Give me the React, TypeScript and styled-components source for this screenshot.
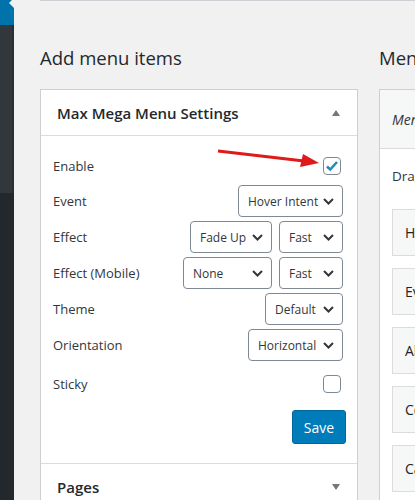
import React from 'react';
import styled, { createGlobalStyle } from 'styled-components';

const GlobalStyle = createGlobalStyle`
  html, body {
    margin: 0;
    padding: 0;
    background: #f1f1f1;
  }
  body {
    font-family: "Open Sans", "Noto Sans", Arial, sans-serif;
    color: #23282d;
    -webkit-font-smoothing: antialiased;
  }
`;

const Page = styled.div`
  display: flex;
  width: 415px;
  height: 500px;
  overflow: hidden;
  background: #f1f1f1;
`;

const Sidebar = styled.div`
  width: 14px;
  flex-shrink: 0;
  display: flex;
  flex-direction: column;
  background: #23282d;
`;

const SideCurrent = styled.div`
  position: relative;
  height: 25px;
  background: #0073aa;

  &::after {
    content: '';
    position: absolute;
    right: 0;
    top: -2px;
    border-right: 5px solid #f1f1f1;
    border-top: 5px solid transparent;
    border-bottom: 5px solid transparent;
  }
`;

const SideSub = styled.div`
  height: 168px;
  background: #32373c;
  border-right: 2px solid #2a2f33;
`;

const Main = styled.div`
  flex: 1;
  min-width: 0;
  padding-left: 26px;
  display: flex;
  flex-direction: column;
`;

const TopBox = styled.div`
  height: 4px;
  background: #fff;
  border: 1px solid #ccd0d4;
  border-top: none;
  margin-right: -20px;
`;

const Columns = styled.div`
  display: flex;
  gap: 21px;
`;

const Column = styled.div<{ $width?: number }>`
  width: ${({ $width }) => ($width ? `${$width}px` : 'auto')};
  flex-shrink: 0;
  display: flex;
  flex-direction: column;
`;

const Heading = styled.h2`
  margin: 0;
  padding-top: 44px;
  height: 44px;
  font-size: 18.5px;
  font-weight: 400;
  color: #23282d;
  white-space: nowrap;
`;

const Panel = styled.div`
  background: #fff;
  border: 1px solid #ccd0d4;
  border-bottom: none;
  height: 420px;
`;

const PanelHeader = styled.div`
  height: 45px;
  display: flex;
  align-items: center;
  justify-content: space-between;
  padding: 0 17px 0 16px;
  border-bottom: 1px solid #dcdcde;
`;

const PanelTitle = styled.h3`
  margin: 0;
  font-size: 15px;
  font-weight: 600;
  color: #23282d;
  white-space: nowrap;
`;

const Caret = styled.span<{ $down?: boolean }>`
  width: 0;
  height: 0;
  border-left: 4px solid transparent;
  border-right: 4px solid transparent;
  ${({ $down }) =>
    $down ? 'border-top: 6px solid #72777c;' : 'border-bottom: 6px solid #72777c;'}
`;

const PanelBody = styled.div`
  position: relative;
  padding: 12px 14px 19px 12px;
  display: flex;
  flex-direction: column;
  border-bottom: 1px solid #dcdcde;
`;

const Row = styled.div<{ $height?: number }>`
  height: ${({ $height }) => $height ?? 36}px;
  display: flex;
  align-items: center;
  justify-content: space-between;
`;

const Label = styled.span`
  font-size: 13px;
  color: #32373c;
`;

const Controls = styled.div`
  display: flex;
  gap: 7px;
`;

const Select = styled.div<{ $width: number }>`
  box-sizing: border-box;
  width: ${({ $width }) => $width}px;
  height: 32px;
  border: 1px solid #7e8993;
  border-radius: 4px;
  display: flex;
  align-items: center;
  justify-content: space-between;
  padding: 0 8px 0 9px;
  font-size: 12px;
  color: #32373c;
  background: #fff;
  white-space: nowrap;
`;

const Checkbox = styled.span`
  box-sizing: border-box;
  width: 18px;
  height: 18px;
  margin-right: 2px;
  border: 1px solid #7e8993;
  border-radius: 4px;
  display: flex;
  align-items: center;
  justify-content: center;
  background: #fff;
`;

const ButtonRow = styled.div`
  display: flex;
  justify-content: flex-end;
  margin-top: 5px;
  margin-right: -3px;
`;

const SaveButton = styled.button`
  width: 54px;
  height: 34px;
  border: 1px solid #006799;
  border-radius: 3px;
  background: #007cba;
  color: #fff;
  font-family: inherit;
  font-size: 14px;
  padding: 0;
`;

const SectionHeader = styled.div`
  height: 46px;
  display: flex;
  align-items: center;
  justify-content: space-between;
  padding: 0 17px 0 16px;
`;

const Arrow = styled.svg`
  position: absolute;
  left: 177px;
  top: 12px;
  overflow: visible;
`;

const RightPanel = styled.div`
  background: #fff;
  border: 1px solid #ccd0d4;
  border-right: none;
  width: 60px;
  height: 420px;
  overflow: hidden;
`;

const RightHeader = styled.div`
  height: 58px;
  display: flex;
  align-items: center;
  padding-left: 12px;
  background: #f6f7f7;
  border-bottom: 1px solid #dcdcde;
  font-size: 14px;
  font-style: italic;
  color: #32373c;
  white-space: nowrap;
`;

const RightBody = styled.div`
  padding: 18px 0 0 12px;
  display: flex;
  flex-direction: column;
  gap: 12px;
`;

const Hint = styled.div`
  font-size: 13.5px;
  color: #32373c;
  white-space: nowrap;
  margin-bottom: 12px;
`;

const MenuItem = styled.div`
  box-sizing: border-box;
  height: 47px;
  width: 240px;
  display: flex;
  align-items: center;
  padding-left: 12px;
  background: #f6f7f7;
  border: 1px solid #dcdcde;
  font-size: 14px;
  color: #1d2327;
  white-space: nowrap;
`;

const Chevron = () => (
  <svg width="11" height="7" viewBox="0 0 11 7">
    <path d="M1 1l4.5 4.5L10 1" fill="none" stroke="#32373c" strokeWidth="2" />
  </svg>
);

const Check = () => (
  <svg width="14" height="12" viewBox="0 0 14 12">
    <path d="M2 6.5l3.2 3L12 2" fill="none" stroke="#1e8cbe" strokeWidth="2.6" />
  </svg>
);

const Dropdown = ({ value, width }: { value: string; width: number }) => (
  <Select $width={width}>
    <span>{value}</span>
    <Chevron />
  </Select>
);

const menuItems = ['Home', 'Events', 'About', 'Contact', 'Careers'];

export default function App() {
  return (
    <>
      <GlobalStyle />
      <Page>
        <Sidebar>
          <SideCurrent />
          <SideSub />
        </Sidebar>
        <Main>
          <TopBox />
          <Columns>
            <Column $width={318}>
              <Heading>Add menu items</Heading>
              <Panel>
                <PanelHeader>
                  <PanelTitle>Max Mega Menu Settings</PanelTitle>
                  <Caret />
                </PanelHeader>
                <PanelBody>
                  <Arrow width="104" height="20" viewBox="0 0 104 20">
                    <path d="M0 3 L86 13" stroke="#e0191b" strokeWidth="3" />
                    <path d="M101 15 L82 19 L85 6 Z" fill="#e0191b" />
                  </Arrow>
                  <Row $height={35}>
                    <Label>Enable</Label>
                    <Checkbox>
                      <Check />
                    </Checkbox>
                  </Row>
                  <Row>
                    <Label>Event</Label>
                    <Dropdown value="Hover Intent" width={105} />
                  </Row>
                  <Row>
                    <Label>Effect</Label>
                    <Controls>
                      <Dropdown value="Fade Up" width={82} />
                      <Dropdown value="Fast" width={64} />
                    </Controls>
                  </Row>
                  <Row>
                    <Label>Effect (Mobile)</Label>
                    <Controls>
                      <Dropdown value="None" width={89} />
                      <Dropdown value="Fast" width={64} />
                    </Controls>
                  </Row>
                  <Row>
                    <Label>Theme</Label>
                    <Dropdown value="Default" width={78} />
                  </Row>
                  <Row>
                    <Label>Orientation</Label>
                    <Dropdown value="Horizontal" width={95} />
                  </Row>
                  <Row $height={42}>
                    <Label>Sticky</Label>
                    <Checkbox />
                  </Row>
                  <ButtonRow>
                    <SaveButton>Save</SaveButton>
                  </ButtonRow>
                </PanelBody>
                <SectionHeader>
                  <PanelTitle>Pages</PanelTitle>
                  <Caret $down />
                </SectionHeader>
              </Panel>
            </Column>
            <Column>
              <Heading>Menu structure</Heading>
              <RightPanel>
                <RightHeader>Menu Name</RightHeader>
                <RightBody>
                  <Hint>Drag each item into the order you prefer.</Hint>
                  {menuItems.map((item) => (
                    <MenuItem key={item}>{item}</MenuItem>
                  ))}
                </RightBody>
              </RightPanel>
            </Column>
          </Columns>
        </Main>
      </Page>
    </>
  );
}
